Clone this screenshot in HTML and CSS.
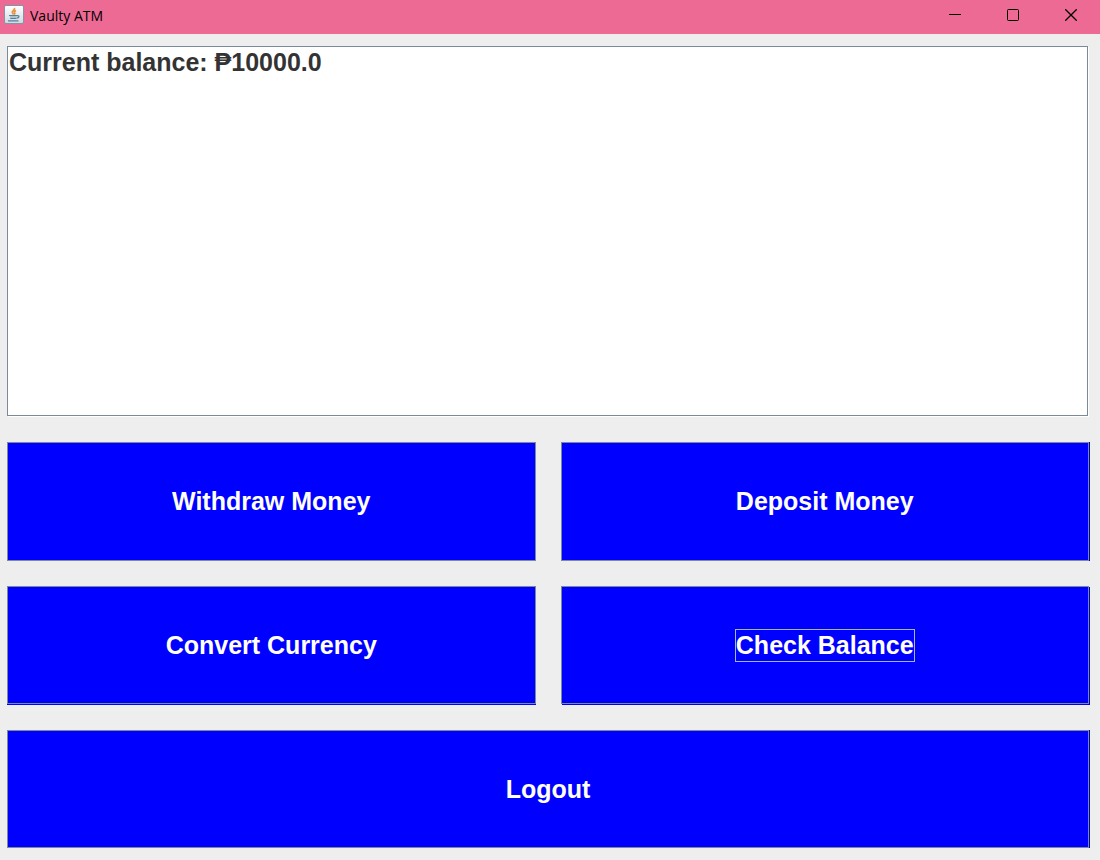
FILE: index.html
```html
<!DOCTYPE html>
<html lang="en">
<head>
<meta charset="utf-8">
<title>Vaulty ATM</title>
<link rel="stylesheet" href="styles.css">
</head>
<body>
<div class="window">
  <header class="titlebar">
    <svg class="app-icon" viewBox="0 0 20 20" aria-hidden="true">
      <defs>
        <linearGradient id="tile" x1="0" y1="0" x2="0" y2="1">
          <stop offset="0" stop-color="#ffffff"/>
          <stop offset="1" stop-color="#d3d8dd"/>
        </linearGradient>
      </defs>
      <rect x="0.5" y="0.5" width="19" height="18" rx="1.5" fill="url(#tile)" stroke="#8195a8"/>
      <path d="M10.500 3c1 2-3 2.500-2.200 4.500.3.700 1 1.300 1.200 2M12 5.500c-2 1-2 1.800-1.300 2.500.5.700 0 1.200-.5 1.600" fill="none" stroke="#e8923d" stroke-width="1.600"/>
      <path d="M5.500 10.500h7.500l-1 3.500h-5.500z" fill="#a9c0d0"/>
      <path d="M5 10.500h8M6.300 13.500h6M4 15.800h10.500M13 10.800c2.800-.6 2.600 2-.4 2.400" fill="none" stroke="#5382a1" stroke-width="1.200"/>
    </svg>
    <h1 class="title">Vaulty ATM</h1>
    <div class="controls">
      <button class="control" type="button" aria-label="Minimize">
        <svg class="glyph" viewBox="0 0 12 12"><path d="M0 5.500h12"/></svg>
      </button>
      <button class="control" type="button" aria-label="Maximize">
        <svg class="glyph" viewBox="0 0 12 12"><rect x="0.5" y="0.5" width="11" height="11" rx="1"/></svg>
      </button>
      <button class="control" type="button" aria-label="Close">
        <svg class="glyph" viewBox="0 0 12 12"><path class="cross" d="M0.300 0.300l11.400 11.400M11.700 0.300L0.300 11.700"/></svg>
      </button>
    </div>
  </header>
  <main class="panel">
    <textarea class="display" aria-label="Messages" readonly>Current balance: ₱10000.0</textarea>
    <button class="action" type="button"><span class="label">Withdraw Money</span></button>
    <button class="action edge-right" type="button"><span class="label">Deposit Money</span></button>
    <button class="action edge-bottom" type="button"><span class="label">Convert Currency</span></button>
    <button class="action edge-bottom edge-both" type="button"><span class="label focused">Check Balance</span></button>
    <button class="action wide edge-right" type="button"><span class="label">Logout</span></button>
  </main>
</div>
</body>
</html>
```
FILE: styles.css
```css
* {
  box-sizing: border-box;
}

body {
  margin: 0;
  background: #eeeeee;
  font-family: "Liberation Sans", Arial, sans-serif;
}

.window {
  display: flex;
  flex-direction: column;
  min-height: 100vh;
}

.titlebar {
  display: flex;
  align-items: center;
  height: 34px;
  padding: 0 0 4px 4px;
  background: #ec6a93;
  color: #000000;
}

.app-icon {
  width: 20px;
  height: 20px;
  margin-right: 6px;
}

.title {
  margin: 0;
  padding-top: 2px;
  font: 400 14px/20px "Open Sans", "Noto Sans", sans-serif;
}

.controls {
  display: flex;
  align-self: stretch;
  margin-left: auto;
}

.control {
  display: flex;
  align-items: center;
  justify-content: center;
  width: 58px;
  padding: 0;
  border: 0;
  background: transparent;
}

.glyph {
  width: 12px;
  height: 12px;
  fill: none;
  stroke: #000000;
  stroke-width: 1;
}

.cross {
  stroke-width: 1.3;
}

.panel {
  flex: 1;
  display: grid;
  grid-template-columns: 1fr 1fr;
  grid-template-rows: 371fr 119fr 119fr 118fr;
  gap: 25px;
  padding: 12px 11px 12px 7px;
}

.display {
  grid-column: 1 / -1;
  width: calc(100% - 1px);
  height: calc(100% - 1px);
  margin: 0;
  padding: 0 1px;
  border: 1px solid #7a8a99;
  outline: 0;
  box-shadow: 1px 1px 0 #ffffff;
  background: #ffffff;
  color: #333333;
  font: 700 25px/30px "Liberation Sans", Arial, sans-serif;
  resize: none;
}

.action {
  display: flex;
  align-items: center;
  justify-content: center;
  padding: 0;
  border: 1px solid #7a8a99;
  background: #0000ff;
  color: #ffffff;
  font: 700 25px/31px "Liberation Sans", Arial, sans-serif;
}

.wide {
  grid-column: 1 / -1;
}

.edge-right {
  box-shadow: 1px 0 0 #0000c8;
}

.edge-bottom {
  margin-bottom: 1px;
  box-shadow: 0 1px 0 #0000ff;
}

.edge-both {
  box-shadow: 1px 1px 0 #0000e0;
}

.label {
  border: 1px solid transparent;
}

.focused {
  border-color: #a3b8cc;
}
```
